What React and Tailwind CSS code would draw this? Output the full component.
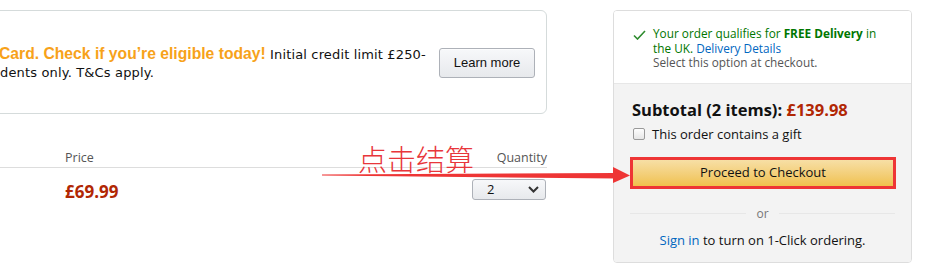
export default function App() {
  const ui = { fontFamily: '"Open Sans", "Noto Sans", sans-serif' }

  return (
    <div className="relative w-[930px] h-[276px] overflow-hidden bg-white" style={ui}>
      <div className="flex pt-[10px]">
        {/* 左侧：信用卡广告 + 价格行 */}
        <div className="w-[547px] flex-shrink-0 flex flex-col">
          <div className="-ml-[30px] h-[104px] border border-[#d5dbdb] rounded-[6px] flex items-center pl-[28px] pr-[11px]">
            <div className="flex-1 text-[13px] tracking-[0.15px] leading-[18px] text-[#111] pt-[2px]" style={{ fontFamily: '"DejaVu Sans", Verdana, sans-serif' }}>
              <div className="whitespace-nowrap">
                <span className="text-[#f7a21a] font-bold text-[15.7px] tracking-normal" style={{ fontFamily: '"Liberation Sans", Arial, sans-serif' }}>
                  Card. Check if you’re eligible today!
                </span>{' '}
                Initial credit limit £250-
              </div>
              <div className="whitespace-nowrap ml-[1px]">dents only. T&amp;Cs apply.</div>
            </div>
            <button
              className="w-[96px] h-[30px] mt-[2px] rounded-[3px] border border-[#adb1b8] bg-gradient-to-b from-[#f7f8fa] to-[#e7e9ec] text-[13px] text-[#111] shadow-[0_1px_0_rgba(255,255,255,0.6)_inset]"
              style={{ fontFamily: '"Liberation Sans", Arial, sans-serif' }}
            >
              Learn more
            </button>
          </div>

          {/* 表头 */}
          <div className="mt-[35px] flex items-end h-[19px] border-b border-[#ddd] text-[12.5px] text-[#555]">
            <div className="pl-[65px] leading-[19px]">Price</div>
            <div className="ml-auto leading-[19px]">Quantity</div>
          </div>

          {/* 价格行 */}
          <div className="flex items-start pt-[11px]">
            <div className="pl-[65px] text-[17px] font-bold text-[#b12704] leading-[26px]">£69.99</div>
            <div className="ml-auto mr-[1px] w-[74px] h-[21px] rounded-[3px] border border-[#adb1b8] bg-gradient-to-b from-[#f7f8fa] to-[#e7e9ec] flex items-center pl-[14px] pr-[6px] text-[13px] text-[#111]">
              <span>2</span>
              <svg className="ml-auto" width="11" height="7" viewBox="0 0 11 7">
                <path d="M1 1l4.5 4.5L10 1" fill="none" stroke="#333" strokeWidth="2" />
              </svg>
            </div>
          </div>
        </div>

        {/* 右侧：结算面板 */}
        <div className="ml-[66px] w-[299px] h-[253px] flex-shrink-0 border border-[#ddd] rounded-[4px] flex flex-col overflow-hidden">
          <div className="bg-white pt-[15px] pb-[13px] pl-[19px] pr-[8px] flex text-[11.8px] leading-[14.5px]">
            <svg className="mt-[4px] flex-shrink-0" width="13" height="10" viewBox="0 0 13 10">
              <path d="M1 5.5l3.5 3.5L12 1" fill="none" stroke="#2e8b2e" strokeWidth="1.6" />
            </svg>
            <div className="ml-[7px]">
              <div className="text-[#007600]">
                Your order qualifies for <span className="font-bold">FREE Delivery</span> in
                <br />
                the UK. <span className="text-[#0066c0]">Delivery Details</span>
              </div>
              <div className="text-[#555]">Select this option at checkout.</div>
            </div>
          </div>
          <div className="flex-1 bg-[#f3f3f3] border-t border-[#e7e7e7] px-[16px] pt-[14px]">
            <div className="pl-[2px] text-[16.5px] font-bold leading-[24px] text-[#111]">
              Subtotal (2 items): <span className="text-[#b12704]">£139.98</span>
            </div>
            <div className="flex items-center pl-[3px] mt-[2px] text-[13px] text-[#111] leading-[20px]">
              <span className="w-[12px] h-[12px] border border-[#999] rounded-[2px] bg-gradient-to-b from-[#fdfdfd] to-[#e6e6e6]" />
              <span className="ml-[7px]">This order contains a gift</span>
            </div>
            <div className="mt-[13px] border-[3px] border-[#ee3535] h-[32px] w-[266px]">
              <div className="h-full bg-gradient-to-b from-[#f7dfa5] to-[#f0c14b] flex items-center justify-center text-[13px] text-[#111]">
                Proceed to Checkout
              </div>
            </div>
            <div className="mt-[18px] flex items-center text-[12px] text-[#767676]">
              <div className="flex-1 h-px bg-[#e7e7e7]" />
              <span className="px-[10px] leading-[14px]">or</span>
              <div className="flex-1 h-px bg-[#e7e7e7]" />
            </div>
            <div className="mt-[10px] text-center text-[13px] text-[#111] leading-[18px]">
              <span className="text-[#0066c0]">Sign in</span> to turn on 1-Click ordering.
            </div>
          </div>
        </div>
      </div>

      {/* 红色标注：箭头与文字 */}
      <div className="absolute left-[358px] top-[140px] text-[29px] leading-[36px] text-[#e8363b] font-light" style={{ fontFamily: '"Noto Sans CJK SC", sans-serif' }}>
        点击结算
      </div>
      <svg className="absolute left-0 top-0 pointer-events-none" width="930" height="276">
        <polygon points="322,174.5 616,173 616,178.5 322,175.5" fill="#ee3535" />
        <polygon points="613,167 630,175.5 613,183" fill="#ee3535" />
      </svg>
    </div>
  )
}
